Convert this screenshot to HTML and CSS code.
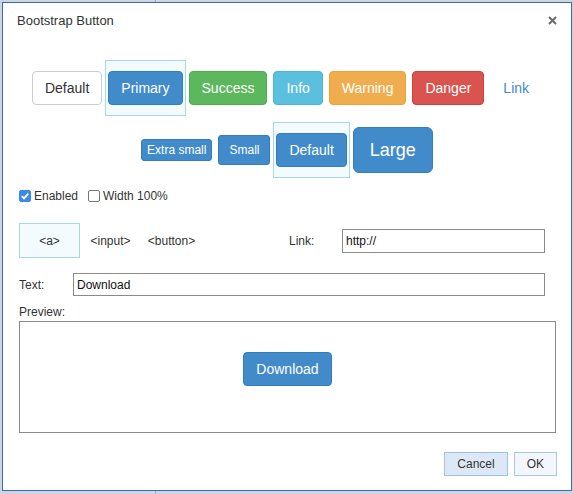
FILE: index.html
```html
<!DOCTYPE html>
<html>
<head>
<meta charset="utf-8">
<link rel="stylesheet" href="styles.css">
</head>
<body>
<div class="dialog">
  <div class="header">
    <span class="title">Bootstrap Button</span>
    <svg class="close" width="9" height="9" viewBox="0 0 9 9"><path d="M1 1 L8 8 M8 1 L1 8" stroke="#6b6b6b" stroke-width="2" fill="none"/></svg>
  </div>
  <div class="row row1">
    <div class="cell"><button class="btn btn-default">Default</button></div>
    <div class="cell sel"><button class="btn btn-primary">Primary</button></div>
    <div class="cell"><button class="btn btn-success">Success</button></div>
    <div class="cell"><button class="btn btn-info">Info</button></div>
    <div class="cell"><button class="btn btn-warning">Warning</button></div>
    <div class="cell"><button class="btn btn-danger">Danger</button></div>
    <div class="cell"><button class="btn btn-link">Link</button></div>
  </div>
  <div class="row row2">
    <div class="cell"><button class="btn btn-primary btn-xs">Extra small</button></div>
    <div class="cell"><button class="btn btn-primary btn-sm">Small</button></div>
    <div class="cell sel"><button class="btn btn-primary">Default</button></div>
    <div class="cell"><button class="btn btn-primary btn-lg">Large</button></div>
  </div>
  <div class="options">
    <label class="opt"><span class="cb checked"><svg width="12" height="12" viewBox="0 0 12 12"><path d="M2.8 6.2 L5 8.4 L9.3 3.6" stroke="#fff" stroke-width="1.8" fill="none"/></svg></span>Enabled</label>
    <label class="opt"><span class="cb"></span>Width 100%</label>
  </div>
  <div class="tabrow">
    <span class="tab sel">&lt;a&gt;</span>
    <span class="tab">&lt;input&gt;</span>
    <span class="tab">&lt;button&gt;</span>
    <span class="link-lbl">Link:</span>
    <input class="field link-input" type="text" value="http://">
  </div>
  <div class="textrow">
    <span class="text-lbl">Text:</span>
    <input class="field text-input" type="text" value="Download">
  </div>
  <div class="preview-lbl">Preview:</div>
  <div class="preview">
    <button class="btn btn-primary">Download</button>
  </div>
  <div class="footer">
    <button class="dbtn cancel">Cancel</button>
    <button class="dbtn ok">OK</button>
  </div>
</div>
</body>
</html>
```

FILE: styles.css
```css
* { box-sizing: border-box; }

body {
  margin: 0;
  height: 494px;
  overflow: hidden;
  background: linear-gradient(to right, transparent 155px, #9fadc0 155px, #9fadc0 156px, transparent 156px), #cdd5df;
  font-family: "Liberation Sans", Arial, sans-serif;
  color: #333;
}

.dialog {
  margin: 2px 0 0 2px;
  width: 570px;
  height: 489px;
  border: 1px solid #3767b9;
  background: #fff;
  display: flex;
  flex-direction: column;
}

.header {
  height: 34px;
  flex: none;
  display: flex;
  align-items: center;
  justify-content: space-between;
  padding: 0 14px;
  font-size: 13px;
  color: #333;
}

.close { display: block; }

.row {
  display: flex;
  justify-content: center;
  align-items: center;
  flex: none;
}

.row1 { margin-top: 23px; }
.row2 { margin-top: 6px; }

.cell {
  border: 1px solid transparent;
  padding: 10px 2px;
}
.row2 .cell { padding: 0 2px; }
.row2 .cell.sel { padding: 10px 2px; }

.cell.sel, .tab.sel {
  background: #f4fbfe;
  border-color: #a3dae8;
}

.btn {
  display: block;
  font-family: "Liberation Sans", Arial, sans-serif;
  font-size: 14px;
  line-height: 20px;
  padding: 6px 12px;
  border: 1px solid transparent;
  border-radius: 4px;
  color: #fff;
  margin: 0;
}
.btn-default { background: #fff; border-color: #ccc; color: #333; }
.btn-primary { background: #428bca; border-color: #357ebd; }
.btn-success { background: #5cb85c; border-color: #4cae4c; }
.btn-info { background: #5bc0de; border-color: #46b8da; }
.btn-warning { background: #f0ad4e; border-color: #eea236; }
.btn-danger { background: #d9534f; border-color: #d43f3a; }
.btn-link { background: transparent; border-color: transparent; color: #428bca; }

.btn-xs { font-size: 12px; line-height: 18px; padding: 1px 5px; border-radius: 3px; }
.btn-sm { font-size: 12px; line-height: 18px; padding: 5px 10px; border-radius: 3px; }
.btn-lg { font-size: 18px; line-height: 24px; padding: 10px 16px; border-radius: 6px; }

.options {
  margin-top: 10px;
  height: 16px;
  flex: none;
  display: flex;
  align-items: center;
  padding-left: 16px;
  font-size: 12px;
}
.opt { display: flex; align-items: center; margin-right: 10px; }
.cb {
  width: 12px;
  height: 12px;
  border: 1px solid #767676;
  border-radius: 2px;
  background: #fff;
  margin-right: 3px;
  display: block;
}
.cb.checked { background: #3d8ae6; border-color: #3d8ae6; }
.cb svg { display: block; margin: -1px 0 0 -1px; }

.tabrow {
  margin-top: 19px;
  height: 35px;
  flex: none;
  display: flex;
  align-items: center;
  padding-left: 16px;
  font-size: 12px;
}
.tab {
  width: 61px;
  height: 35px;
  display: flex;
  align-items: center;
  justify-content: center;
  border: 1px solid transparent;
}
.link-lbl { margin-left: 87px; width: 53px; }

.field {
  height: 24px;
  border: 1px solid #8a8a8a;
  padding: 0 3px;
  font-family: "Liberation Sans", Arial, sans-serif;
  font-size: 12px;
  color: #111;
  background: #fff;
  margin: 0;
  outline: none;
}
.link-input { width: 203px; }

.textrow {
  margin-top: 15px;
  flex: none;
  display: flex;
  align-items: center;
  padding-left: 16px;
  font-size: 12px;
}
.text-lbl { width: 54px; }
.text-input { width: 472px; height: 23px; }

.preview-lbl {
  margin-top: 9px;
  padding-left: 16px;
  font-size: 12px;
  line-height: 14px;
  flex: none;
}

.preview {
  margin: 2px 15px 0 16px;
  height: 112px;
  flex: none;
  border: 1px solid #8a8a8a;
  display: flex;
  justify-content: center;
  align-items: flex-start;
  padding-top: 30px;
}

.footer {
  margin-top: 19px;
  flex: none;
  display: flex;
  justify-content: flex-end;
  gap: 6px;
  padding-right: 14px;
}
.dbtn {
  height: 24px;
  padding: 0 12px;
  font-family: "Liberation Sans", Arial, sans-serif;
  font-size: 12px;
  color: #333;
  border: 1px solid #9ebfe8;
  margin: 0;
}
.cancel { background: #dde8f6; }
.ok { background: #f3f7fd; border-color: #a9c8ee; }
```
